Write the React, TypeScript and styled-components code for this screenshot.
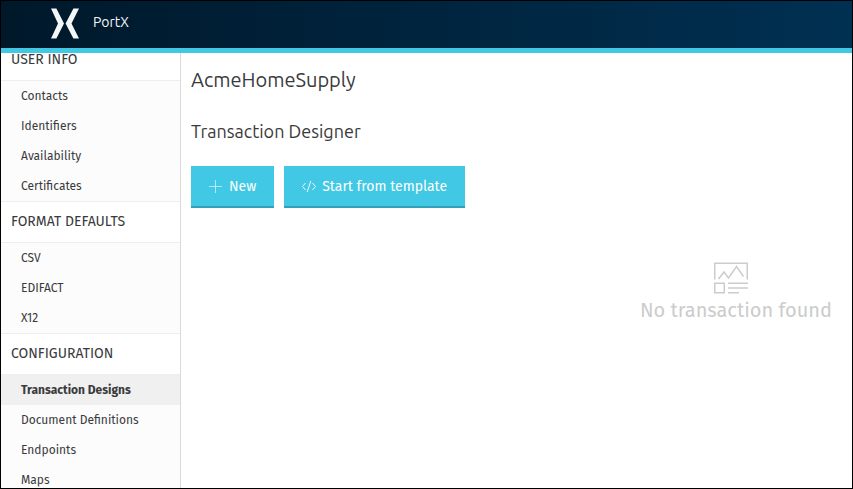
import React from "react";
import styled, { createGlobalStyle } from "styled-components";

const GlobalStyle = createGlobalStyle`
  *, *::before, *::after { box-sizing: border-box; }
  body {
    margin: 0;
    background: #fff;
    color: #3a3a3c;
    font-family: "Fira Sans", "Noto Sans", sans-serif;
  }
`;

const Frame = styled.div`
  display: flex;
  flex-direction: column;
  height: 100vh;
  border: 1px solid #000;
  overflow: hidden;
`;

const TopBar = styled.header`
  display: flex;
  flex: none;
  align-items: center;
  height: 52px;
  padding: 0 50px 2px;
  border-bottom: 5px solid #41c8e5;
  background: linear-gradient(90deg, #00182a, #003052);
`;

const Brand = styled.a`
  display: flex;
  align-items: center;
  gap: 14px;
  color: #f4f6f8;
  font-family: "Ubuntu", "Noto Sans", sans-serif;
  font-size: 14px;
  line-height: 20px;
  text-decoration: none;
`;

const BrandName = styled.span`
  padding-bottom: 3px;
`;

const Body = styled.div`
  display: flex;
  flex: 1;
  min-height: 0;
`;

const Sidebar = styled.nav`
  flex: none;
  width: 180px;
  border-right: 1px solid #d9d9d9;
  background: #fcfcfc;
  overflow: hidden;
`;

const Sections = styled.div`
  margin-top: -14px;
`;

const SectionTitle = styled.h3`
  margin: 0;
  padding: 0 10px;
  border: solid #eee;
  border-width: 1px 0;
  background: #fff;
  font-size: 14px;
  font-weight: 400;
  line-height: 40px;
`;

const NavList = styled.ul`
  margin: 0;
  padding: 0;
  list-style: none;
`;

const NavLink = styled.a<{ $active: boolean }>`
  display: block;
  padding: 0 20px;
  background: ${(p) => (p.$active ? "#f0f0f0" : "transparent")};
  color: inherit;
  font-size: 12px;
  font-weight: ${(p) => (p.$active ? 700 : 400)};
  line-height: 30px;
  text-decoration: none;
  white-space: nowrap;
`;

const Main = styled.main`
  display: flex;
  flex: 1;
  flex-direction: column;
  min-width: 0;
  padding: 12px 20px 0 10px;
`;

const PageTitle = styled.h1`
  margin: 0 0 24px;
  font-family: "Ubuntu", "Noto Sans", sans-serif;
  font-size: 20px;
  font-weight: 400;
  line-height: 30px;
`;

const SubTitle = styled.h2`
  margin: 0 0 22px;
  font-family: "Ubuntu", "Noto Sans", sans-serif;
  font-size: 18px;
  font-weight: 400;
  line-height: 25px;
`;

const Actions = styled.div`
  display: flex;
  gap: 10px;
`;

const ActionButton = styled.button`
  display: flex;
  align-items: center;
  gap: 6px;
  height: 42px;
  padding: 2px 18px 0 17px;
  border: 0;
  border-bottom: 2px solid #34a0b7;
  background: #41c8e5;
  color: #fff;
  font-family: inherit;
  font-size: 14px;
  line-height: 20px;
  white-space: nowrap;
  cursor: pointer;
`;

const EmptyState = styled.div`
  display: flex;
  flex-direction: column;
  align-items: center;
  align-self: flex-end;
  margin-top: 54px;
  color: #ccc;
`;

const EmptyText = styled.p`
  margin: 0;
  font-size: 20px;
  line-height: 32px;
`;

const EmptyIcon = styled.svg`
  margin-right: 10px;
`;

const sections = [
  { title: "USER INFO", items: ["Contacts", "Identifiers", "Availability", "Certificates"] },
  { title: "FORMAT DEFAULTS", items: ["CSV", "EDIFACT", "X12"] },
  {
    title: "CONFIGURATION",
    items: ["Transaction Designs", "Document Definitions", "Endpoints", "Maps"],
  },
];

const activeItem = "Transaction Designs";

function Logo() {
  return (
    <svg width="28" height="31" viewBox="0 0 28 31" fill="#f4f6f8" aria-hidden="true">
      <path d="M0 0.500H5.400L13 15.500L5.400 30.500H0L7 15.500Z" />
      <path d="M28 0.500H22.400L14.600 15.500L22.400 30.500H28L20.500 15.500Z" />
    </svg>
  );
}

function PlusIcon() {
  return (
    <svg width="15" height="14" viewBox="0 0 15 14" fill="none" stroke="#fff" strokeOpacity="0.6" aria-hidden="true">
      <path d="M7.500 0V13M1 6.500H14" />
    </svg>
  );
}

function CodeIcon() {
  return (
    <svg width="15" height="14" viewBox="0 0 15 14" fill="none" stroke="#fff" strokeOpacity="0.9" aria-hidden="true">
      <path d="M4.500 3L1.500 6.500L4.500 10M11.500 3L14.500 6.500L11.500 10M9.800 1L6.200 12" />
    </svg>
  );
}

function ReportIcon() {
  return (
    <EmptyIcon width="34" height="32" viewBox="0 0 34 32" fill="none" stroke="#ccc" strokeWidth="1.500" aria-hidden="true">
      <path d="M0.750 17.500V1.250H33.250V17.500" />
      <path d="M4.500 17L10 10L14.500 16L22.500 4.500L29.500 14.500" />
      <path d="M0.750 21.250H10.250V30.750H0.750Z" />
      <path d="M14 21.250H34M14 26H34M14 30.750H25" />
    </EmptyIcon>
  );
}

export default function App() {
  return (
    <>
      <GlobalStyle />
      <Frame>
        <TopBar>
          <Brand href="#">
            <Logo />
            <BrandName>PortX</BrandName>
          </Brand>
        </TopBar>
        <Body>
          <Sidebar aria-label="Settings">
            <Sections>
              {sections.map((section) => (
                <section key={section.title}>
                  <SectionTitle>{section.title}</SectionTitle>
                  <NavList>
                    {section.items.map((item) => (
                      <li key={item}>
                        <NavLink
                          href="#"
                          $active={item === activeItem}
                          aria-current={item === activeItem ? "page" : undefined}
                        >
                          {item}
                        </NavLink>
                      </li>
                    ))}
                  </NavList>
                </section>
              ))}
            </Sections>
          </Sidebar>
          <Main>
            <PageTitle>AcmeHomeSupply</PageTitle>
            <SubTitle>Transaction Designer</SubTitle>
            <Actions>
              <ActionButton type="button">
                <PlusIcon />
                New
              </ActionButton>
              <ActionButton type="button">
                <CodeIcon />
                Start from template
              </ActionButton>
            </Actions>
            <EmptyState>
              <ReportIcon />
              <EmptyText>No transaction found</EmptyText>
            </EmptyState>
          </Main>
        </Body>
      </Frame>
    </>
  );
}
